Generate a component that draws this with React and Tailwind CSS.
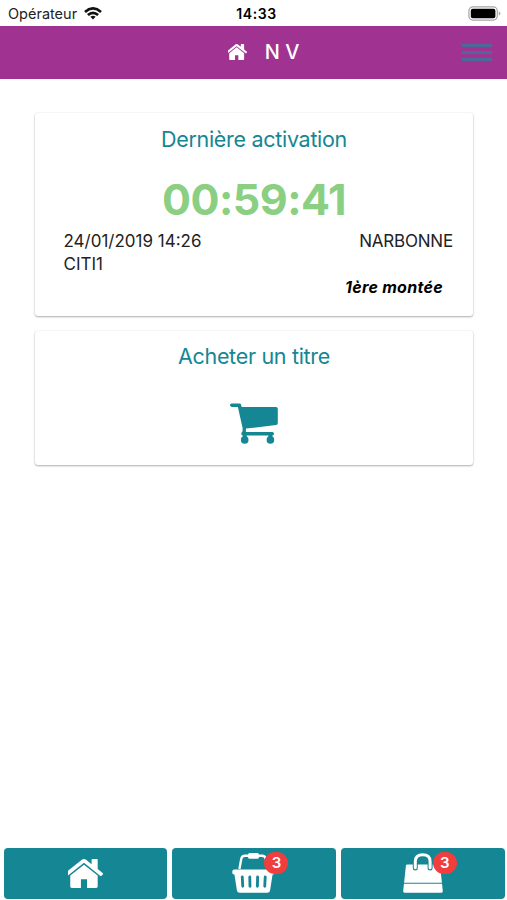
import React from 'react';

function HomeIcon({ className }) {
  return (
    <svg viewBox="161 253 1470 1283" preserveAspectRatio="none" fill="currentColor" className={className}>
      <path d="M1408 992v480q0 26-19 45t-45 19h-384v-384h-256v384h-384q-26 0-45-19t-19-45v-480q0-1 .5-3t.5-3l575-474 575 474q1 2 1 6zm223-69l-62 74q-8 9-21 11h-3q-13 0-21-7l-692-577-692 577q-12 8-24 7-13-2-21-11l-62-74q-8-10-7-23.5t11-21.5l719-599q32-26 76-26t76 26l244 204v-195q0-14 9-23t23-9h192q14 0 23 9t9 23v408l219 182q10 8 11 21.5t-7 23.5z" />
    </svg>
  );
}

function WifiIcon() {
  return (
    <svg viewBox="0 0 18 13" className="w-[18px] h-[13px]" fill="none" stroke="#111" strokeWidth="2.7">
      <path d="M1 4.9Q9-2.1 17 4.9" />
      <path d="M3.9 8.1Q9 3.5 14.1 8.1" />
      <path d="M9 12.4L6.4 9.8Q9 7.7 11.6 9.8Z" fill="#111" stroke="none" />
    </svg>
  );
}

function BatteryIcon() {
  return (
    <svg viewBox="0 0 33 15" className="w-[33px] h-[15px]">
      <rect x="0.9" y="0.9" width="28.4" height="13.2" rx="4" fill="#fff" stroke="#a5a5a5" strokeWidth="1.2" />
      <rect x="2.8" y="2.8" width="24.6" height="9.4" rx="2" fill="#000" />
      <path d="M30.8 5.4q1.6.6 1.6 2.1t-1.6 2.1z" fill="#a5a5a5" />
    </svg>
  );
}

function CartIcon() {
  return (
    <svg viewBox="0 0 48 41" className="w-12 h-[41px]" fill="#158693">
      <path d="M1.7.4H9.4q1.4 0 1.7 1.4L11.7 4H46q1.8 0 1.8 1.8V20q0 1.8-1.8 2L15.9 25.6V29H42.4q1.6 0 1.6 1.8t-1.6 1.8H13.2q-1.9 0-1.9-1.9 0-1 1.3-2.4V25L7.9 3.9H1.7Q0 3.9 0 2.1T1.7.4z" />
      <rect x="12.8" y="31" width="3.8" height="4" />
      <rect x="38.5" y="31" width="3.8" height="4" />
      <circle cx="14.7" cy="36.9" r="3.8" />
      <circle cx="40.4" cy="36.9" r="3.8" />
    </svg>
  );
}

function BasketIcon() {
  return (
    <svg viewBox="0 0 44 40" preserveAspectRatio="none" className="w-[43px] h-10">
      <path d="M7.6 16L9.5 5.8Q10.2 2.8 13.2 2.8H30.8Q33.8 2.8 34.5 5.8L36.4 16" fill="none" stroke="#fff" strokeWidth="2.4" />
      <rect x="16.5" y="0" width="11" height="5.8" rx="1.5" fill="#fff" />
      <path d="M2 16.6H42q1.8 0 1.8 2.5T42 21.6h-.5L39 37.2q-.4 2.5-2.9 2.5H7.9q-2.5 0-2.9-2.5L2.5 21.6H2Q.2 21.6.2 19.1T2 16.6z" fill="#fff" />
      <g stroke="#158693" strokeWidth="2.9" strokeLinecap="round">
        <path d="M10.5 24L11 33.2" />
        <path d="M18.2 24L18.4 33.2" />
        <path d="M26.2 24L26 33.2" />
        <path d="M34 24L33.5 33.2" />
      </g>
    </svg>
  );
}

function BagIcon() {
  return (
    <svg viewBox="0 0 40 40" className="w-10 h-10">
      <path d="M4.4 11.5H35.6Q37 11.5 37.1 12.8L39.8 38Q40 39.7 38.4 39.7H1.6Q0 39.7.2 38L2.9 12.8Q3 11.5 4.4 11.5z" fill="#fff" />
      <path d="M.8 30.3H39.2" stroke="#158693" strokeWidth="1.1" />
      <path d="M12.3 15V8.5Q12.3 1.7 19.7 1.7T27.1 8.5V15" fill="none" stroke="#158693" strokeWidth="5" strokeLinecap="round" />
      <path d="M12.3 14.7V8.5Q12.3 1.7 19.7 1.7T27.1 8.5V14.7" fill="none" stroke="#fff" strokeWidth="3" strokeLinecap="round" />
    </svg>
  );
}

function Badge({ className, children }) {
  return (
    <span className={`absolute -top-px w-6 h-[22px] rounded-full bg-[#f03d3e] text-white text-[15px] leading-[22px] font-semibold text-center ${className}`}>
      {children}
    </span>
  );
}

function Card({ className, children }) {
  return (
    <section className={`ml-[35px] mr-[34px] rounded-[3px] bg-white shadow-[0_1px_2px_rgba(0,0,0,0.3),0_0_2px_rgba(0,0,0,0.1)] ${className}`}>
      {children}
    </section>
  );
}

export default function App() {
  return (
    <div className="flex flex-col h-[900px] w-[507px] overflow-hidden bg-white text-black font-['Inter','Liberation_Sans',sans-serif]">
      <div className="grid grid-cols-3 items-center h-[25.5px] shrink-0 pl-2 pr-[6px] pt-[2px] text-[14.5px]">
        <div className="flex items-center gap-[7px] text-[#222]">
          <span>Opérateur</span>
          <WifiIcon />
        </div>
        <span className="text-center text-[14px] font-semibold tracking-[0.6px] pl-1">14:33</span>
        <div className="flex justify-end">
          <BatteryIcon />
        </div>
      </div>

      <header className="grid grid-cols-[60px_1fr_60px] items-center h-[53.5px] shrink-0 bg-[#a03392] text-white">
        <span />
        <h1 className="flex items-center justify-center gap-[18px] pl-5 text-[20px] font-medium">
          <HomeIcon className="w-[19px] h-4" />
          <span className="whitespace-nowrap">N V</span>
        </h1>
        <button className="flex flex-col gap-1 justify-self-end mr-[15px] mt-px w-[30px]">
          <span className="h-[3px] bg-[#4c6997]" />
          <span className="h-[3px] bg-[#4c6997]" />
          <span className="h-[3px] bg-[#4c6997]" />
        </button>
      </header>

      <main className="flex flex-col flex-1 pt-[34px]">
        <Card className="h-[203px]">
          <h2 className="pt-[10px] text-center text-[21.5px] leading-8 tracking-[-0.3px] text-[#158693]">Dernière activation</h2>
          <p className="mt-[18px] text-center text-[43px] leading-[52px] font-bold tracking-[-0.5px] text-[#8bcf82]">00:59:41</p>
          <div className="flex justify-between pl-[28.5px] pr-[20px] mt-[5px] text-[17px] leading-[23px] text-[#222]">
            <p>24/01/2019 14:26<br />CITI1</p>
            <p className="tracking-[-0.2px]">NARBONNE</p>
          </div>
          <p className="pr-[30px] text-right text-[16px] leading-[23px] font-bold italic tracking-[0.3px]">1ère montée</p>
        </Card>
        <Card className="h-[134px] mt-[15px]">
          <h2 className="pt-[9px] text-center text-[21.5px] leading-8 tracking-[-0.3px] text-[#158693]">Acheter un titre</h2>
          <div className="flex justify-center mt-[31px]">
            <CartIcon />
          </div>
        </Card>
      </main>

      <nav className="grid grid-cols-3 gap-[5px] h-[52.5px] shrink-0 pl-[3.5px] pr-[2.5px] pb-[1.5px] text-white">
        <button className="flex items-center justify-center rounded-[4px] bg-[#158693]">
          <HomeIcon className="w-[35px] h-[29px]" />
        </button>
        <button className="flex items-center justify-center rounded-[4px] bg-[#158693]">
          <span className="relative">
            <BasketIcon />
            <Badge className="left-8">3</Badge>
          </span>
        </button>
        <button className="flex items-center justify-center rounded-[4px] bg-[#158693]">
          <span className="relative">
            <BagIcon />
            <Badge className="left-[30px]">3</Badge>
          </span>
        </button>
      </nav>
    </div>
  );
}
